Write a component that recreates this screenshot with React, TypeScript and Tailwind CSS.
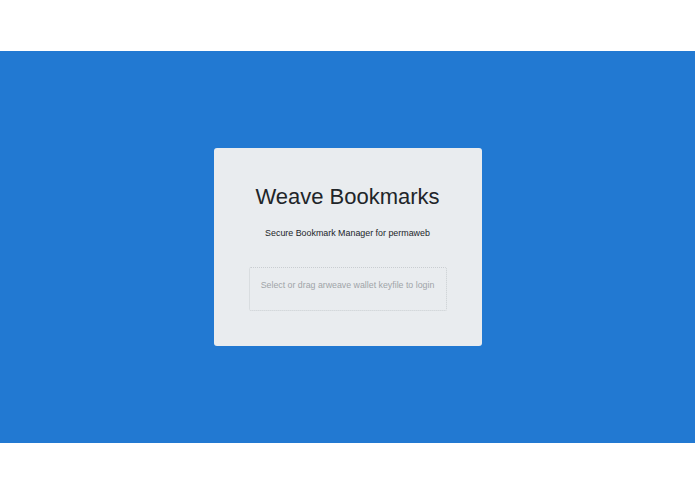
export default function App() {
  return (
    <div className="flex h-[494px] w-full flex-col bg-white font-['Liberation_Sans',Arial,sans-serif]">
      <div className="h-[51px] shrink-0 bg-white" />

      {/* Blue stage */}
      <div className="flex h-[392px] shrink-0 items-center justify-center bg-[#2279d2]">
        <div className="flex h-[198px] w-[268px] flex-col items-center rounded-[3px] bg-[#e9ecef] pt-[38px]">
          <h1 className="text-[22px] leading-[22px] font-normal text-[#212529]">Weave Bookmarks</h1>
          <p className="mt-[21px] text-[8.9px] leading-[8.9px] text-[#212529]">
            Secure Bookmark Manager for permaweb
          </p>

          {/* Keyfile drop zone */}
          <label className="mt-[29px] flex h-[44px] w-[198px] cursor-pointer justify-center rounded-[2px] border border-dotted border-[#c9cdd1] pt-[13px]">
            <span className="text-[8.8px] leading-[8.8px] text-[#a0a4a8]">
              Select or drag arweave wallet keyfile to login
            </span>
            <input type="file" className="hidden" />
          </label>
        </div>
      </div>

      <div className="flex-1 bg-white" />
    </div>
  );
}
